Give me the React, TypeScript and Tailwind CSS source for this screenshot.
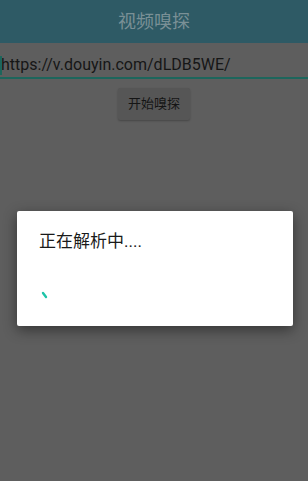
export default function App() {
  return (
    <div
      className="relative h-[481px] w-[308px] overflow-hidden bg-[#5e5e5e]"
      style={{ fontFamily: 'Roboto, "Noto Sans CJK SC", sans-serif' }}
    >
      <div className="flex h-[43px] items-center justify-center bg-[#2e5a65]">
        <span className="text-[18px] text-[#7a9096]">视频嗅探</span>
      </div>

      <div className="relative mt-[9px] h-[27px] border-b-2 border-[#1d665c]">
        <div className="absolute left-0 top-[4px] h-[19px] w-[2px] bg-[#1d665c]" />
        <span className="block pl-[1px] text-[16px] leading-[26px] text-[#161616]">
          https://v.douyin.com/dLDB5WE/
        </span>
      </div>

      <div className="mt-[9px] flex justify-center">
        <div className="flex h-[32px] w-[72px] items-center justify-center rounded-[2px] bg-[#565656] text-[13px] text-[#151515] shadow-[0_1px_2px_rgba(0,0,0,0.25)]">
          开始嗅探
        </div>
      </div>

      <div className="absolute left-[17px] top-[211px] h-[115px] w-[276px] rounded-[2px] bg-white shadow-[0_4px_14px_rgba(0,0,0,0.45)]">
        <div className="pl-[22px] pt-[19px] text-[17px] leading-[22px] text-[#1a1a1a]">
          正在解析中....
        </div>
        <svg className="absolute left-[21px] top-[74px]" width="16" height="20" viewBox="0 0 16 20">
          <path d="M5 8 L8 12" stroke="#1ec4a8" strokeWidth="2.4" strokeLinecap="round" fill="none" />
        </svg>
      </div>
    </div>
  );
}
